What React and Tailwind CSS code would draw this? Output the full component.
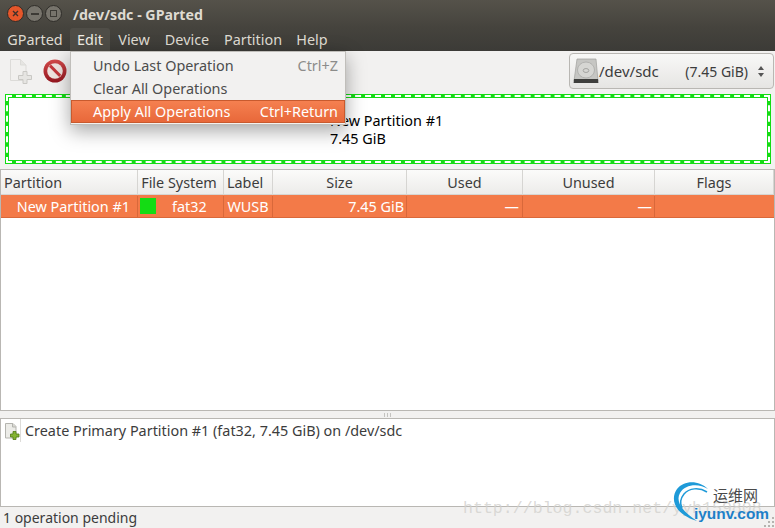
const columns = [
  { name: 'Partition', width: 'w-[137px]', align: 'justify-start pl-[3px]' },
  { name: 'File System', width: 'w-[86px]', align: 'justify-center pr-[3px]' },
  { name: 'Label', width: 'w-[49px]', align: 'justify-start pl-[3px]' },
  { name: 'Size', width: 'w-[134px]', align: 'justify-center' },
  { name: 'Used', width: 'w-[116px]', align: 'justify-center' },
  { name: 'Unused', width: 'w-[132px]', align: 'justify-center' },
  { name: 'Flags', width: 'flex-1', align: 'justify-center' },
];

const menus = [
  { name: 'GParted', width: 'w-[70px]' },
  { name: 'Edit', width: 'w-[40px]' },
  { name: 'View', width: 'w-[48px]' },
  { name: 'Device', width: 'w-[58px]' },
  { name: 'Partition', width: 'w-[74px]' },
  { name: 'Help', width: 'w-[44px]' },
];

function WindowButton({ className, children }) {
  return (
    <div className={`flex h-[17px] w-[17px] items-center justify-center rounded-full border border-[#2f2d29] ${className}`}>
      {children}
    </div>
  );
}

function TitleBar() {
  return (
    <div className="flex h-[28px] items-center bg-gradient-to-b from-[#55524a] to-[#45433d] pl-[7px]">
      <div className="flex gap-[2px]">
        <WindowButton className="bg-[#e5562a]">
          <svg width="7" height="7" viewBox="0 0 7 7"><path d="M1 1l5 5M6 1L1 6" stroke="#40302a" strokeWidth="1.4" /></svg>
        </WindowButton>
        <WindowButton className="bg-[#77746c]">
          <div className="h-[2px] w-[8px] bg-[#3c3a35]" />
        </WindowButton>
        <WindowButton className="bg-[#77746c]">
          <div className="h-[7px] w-[7px] border border-[#3c3a35]" />
        </WindowButton>
      </div>
      <span className="ml-[11px] pt-px text-[14.2px] font-bold text-[#dfdbd2]">/dev/sdc - GParted</span>
    </div>
  );
}

function MenuBar() {
  return (
    <div className="flex h-[23px] items-stretch bg-gradient-to-b from-[#45433d] to-[#3c3b37] text-[14.4px] text-[#dfdbd2]">
      {menus.map((m) => (
        <div
          key={m.name}
          className={`flex items-center justify-center ${m.width} ${m.name === 'Edit' ? 'rounded-t-[3px] bg-[#4f4d47] text-[#f0ede6]' : ''}`}
        >
          {m.name}
        </div>
      ))}
    </div>
  );
}

function NewIcon() {
  return (
    <svg width="24" height="26" viewBox="0 0 24 26" fill="none">
      <path d="M1.500 1.500h10l5.500 5.500v15.500h-15.500z" fill="#f1f0ee" stroke="#dcdbd8" />
      <path d="M11.500 1.500v5.500h5.500" fill="#e6e5e2" stroke="#dcdbd8" />
      <path d="M14 13.500h4v4h4.500v4H18v4h-4v-4H9.500v-4H14z" fill="#e6e5e2" stroke="#c9c8c4" />
    </svg>
  );
}

function StopIcon() {
  return (
    <svg width="24" height="24" viewBox="0 0 24 24">
      <defs>
        <linearGradient id="stopRing" x1="0" y1="0" x2="0" y2="1">
          <stop offset="0" stopColor="#d2494a" />
          <stop offset="1" stopColor="#94161f" />
        </linearGradient>
      </defs>
      <circle cx="12" cy="12" r="11.500" fill="url(#stopRing)" />
      <circle cx="12" cy="12" r="7.800" fill="#efe3df" />
      <path d="M6 7.800L16.200 18l2-2.200L8 5.600z" fill="#c2353a" />
    </svg>
  );
}

function DiskIcon() {
  return (
    <svg width="26" height="26" viewBox="0 0 26 26">
      <path d="M4 1h19l2 22H1z" fill="#c6c6c3" stroke="#9f9f9c" strokeWidth="0.7" />
      <ellipse cx="13" cy="12" rx="8.500" ry="8" fill="#d6d6d3" stroke="#aaaaa7" strokeWidth="0.8" />
      <ellipse cx="13" cy="12.500" rx="2.800" ry="2" fill="none" stroke="#989895" strokeWidth="0.8" />
      <path d="M1 21h24l.4 4H.6z" fill="#3f3f3d" />
    </svg>
  );
}

function CreateIcon() {
  return (
    <svg width="16" height="18" viewBox="0 0 16 18" fill="none">
      <path d="M1.500 1.500h7.500l3 3v11.500h-10.500z" fill="#ececE8" stroke="#b4b4af" />
      <path d="M8.500 1.500v3.500h3.500" fill="#d9d9d4" stroke="#b4b4af" />
      <path d="M9 9.500h3v2.500h3v3h-3v2.500H9V15H6.500v-3H9z" fill="#84b332" stroke="#4f7a12" strokeWidth="0.8" />
    </svg>
  );
}

function Toolbar() {
  return (
    <div className="flex h-[41px] items-center justify-between bg-[#f2f1f0] pl-[9px] pr-px">
      <div className="flex items-center gap-[10px]">
        <NewIcon />
        <StopIcon />
      </div>
      <div className="flex h-[36px] w-[205px] items-center rounded-[4px] border border-[#b9b7b3] bg-gradient-to-b from-[#f8f8f7] to-[#e6e5e3] pl-[3px] pr-[9px] text-[14px] text-[#3c3c3c]">
        <DiskIcon />
        <span className="text-[15px]">/dev/sdc</span>
        <span className="ml-auto">(7.45 GiB)</span>
        <div className="ml-[10px] flex flex-col gap-[3px]">
          <div className="h-0 w-0 border-x-[3px] border-b-[4px] border-x-transparent border-b-[#555]" />
          <div className="h-0 w-0 border-x-[3px] border-t-[4px] border-x-transparent border-t-[#555]" />
        </div>
      </div>
    </div>
  );
}

function PartitionMap() {
  return (
    <div className="bg-[#f2f1f0] px-[5px] pt-[2px] pb-[5px]">
      <div className="h-[70px] w-[766px] border border-[#14dc14]">
        <div className="h-full border-2 border-dashed border-white bg-[#14dc14]">
          <div className="flex h-full items-center justify-center border border-[#14dc14] bg-white pt-[2px] pr-[3px] text-[14.4px] leading-[18px] text-black">
            <div className="flex w-[113px] flex-col items-start">
              <span className="whitespace-nowrap">New Partition #1</span>
              <span>7.45 GiB</span>
            </div>
          </div>
        </div>
      </div>
    </div>
  );
}

function PartitionTable() {
  return (
    <div className="h-[243px] border border-[#b9b7b3] bg-white text-[14.4px]">
      <div className="flex h-[25px] bg-gradient-to-b from-[#fbfbfa] to-[#ecebe9] text-[#3c3c3c]">
        {columns.map((c) => (
          <div key={c.name} className={`flex items-center border-r border-b border-[#d6d5d2] pt-[2px] ${c.width} ${c.align}`}>
            {c.name}
          </div>
        ))}
      </div>
      <div className="flex h-[23px] items-stretch border-b border-[#d9683a] bg-[#f37a48] pt-px text-white">
        <div className="flex w-[137px] items-center justify-end border-r border-[#d9683a] pr-[7px]">New Partition #1</div>
        <div className="flex w-[86px] items-center border-r border-[#d9683a] pl-[2px]">
          <div className="h-[16px] w-[16px] bg-[#14dc14]" />
          <span className="ml-[16px]">fat32</span>
        </div>
        <div className="flex w-[49px] items-center justify-center border-r border-[#d9683a]">WUSB</div>
        <div className="flex w-[134px] items-center justify-end border-r border-[#d9683a] pr-[2px]">7.45 GiB</div>
        <div className="flex w-[116px] items-center justify-end border-r border-[#d9683a] pr-[3px]">—</div>
        <div className="flex w-[132px] items-center justify-end border-r border-[#d9683a] pr-[2px]">—</div>
        <div className="flex-1" />
      </div>
    </div>
  );
}

function Pane() {
  return (
    <div className="flex h-[7px] items-center justify-center bg-[#f2f1f0]">
      <div className="flex gap-[2px]">
        <div className="h-[4px] w-px bg-[#c4c3c0]" />
        <div className="h-[4px] w-px bg-[#c4c3c0]" />
        <div className="h-[4px] w-px bg-[#c4c3c0]" />
      </div>
    </div>
  );
}

function OperationLog() {
  return (
    <div className="h-[89px] border border-[#b9b7b3] bg-white text-[14.4px] text-[#3c3c3c]">
      <div className="flex h-[23px] items-center">
        <div className="flex h-full w-[20px] items-center justify-center border-r border-[#dddcd9] pl-[2px]">
          <CreateIcon />
        </div>
        <span className="ml-[4px]">Create Primary Partition #1 (fat32, 7.45 GiB) on /dev/sdc</span>
      </div>
    </div>
  );
}

function EditMenu() {
  return (
    <div className="absolute top-[51px] left-[70px] z-10 h-[74px] w-[276px] border border-[#c0beba] bg-[#f2f1f0] pt-[2px] text-[14.4px] text-[#4c4c4c] shadow-[0_6px_18px_rgba(0,0,0,0.35)]">
      <div className="flex h-[23px] items-center justify-between pr-[7px] pl-[22px]">
        <span>Undo Last Operation</span>
        <span className="text-[#8c8c8a]">Ctrl+Z</span>
      </div>
      <div className="flex h-[23px] items-center pl-[22px]">Clear All Operations</div>
      <div className="flex h-[23px] items-center justify-between border border-[#c85a2e] bg-gradient-to-b from-[#f58050] to-[#e8683a] pr-[6px] pl-[21px] text-white">
        <span>Apply All Operations</span>
        <span>Ctrl+Return</span>
      </div>
    </div>
  );
}

function Watermark() {
  return (
    <div className="pointer-events-none absolute right-0 bottom-0 z-20 h-[68px] w-[312px]">
      <span className="absolute top-[37px] left-0 font-['Liberation_Mono',monospace] text-[16.6px] whitespace-nowrap text-[#d2d1ce]/80">
        http://blog.csdn.net/yyh159808
      </span>
      <svg className="absolute top-[20px] left-[208px]" width="42" height="44" viewBox="0 0 42 44" fill="none">
        <path d="M37 9C28 0 13 0 6 9C-1 19 3 34 26 41C12 32 4 22 9 13C14 4 28 3 37 9z" fill="#1e9ad8" />
        <path d="M36 12C28 7 18 8 13 14C9 19 9 24 11 28" stroke="#1e9ad8" strokeWidth="1.5" />
      </svg>
      <span className="absolute top-[25px] left-[250px] font-['Noto_Sans_CJK_SC',sans-serif] text-[15px] leading-[20px] text-[#4a4a4a]">运维网</span>
      <span className="absolute top-[45px] left-[231px] font-['Liberation_Sans',sans-serif] text-[15.4px] leading-[18px] font-bold text-[#1e80c8]">iyunv.com</span>
    </div>
  );
}

function ResizeGrip() {
  return (
    <svg className="absolute right-0 bottom-0 z-30" width="11" height="11" viewBox="0 0 11 11" fill="#b5b3af">
      <rect x="8" y="0" width="2" height="2" />
      <rect x="4" y="4" width="2" height="2" />
      <rect x="8" y="4" width="2" height="2" />
      <rect x="0" y="8" width="2" height="2" />
      <rect x="4" y="8" width="2" height="2" />
      <rect x="8" y="8" width="2" height="2" />
    </svg>
  );
}

export default function App() {
  return (
    <div className="relative flex h-[528px] w-[775px] flex-col overflow-hidden bg-[#f2f1f0] font-['Noto_Sans',sans-serif]">
      <TitleBar />
      <MenuBar />
      <Toolbar />
      <PartitionMap />
      <PartitionTable />
      <Pane />
      <OperationLog />
      <div className="flex flex-1 items-center pl-[3px] text-[14px] text-[#3c3c3c]">1 operation pending</div>
      <EditMenu />
      <Watermark />
      <ResizeGrip />
    </div>
  );
}
